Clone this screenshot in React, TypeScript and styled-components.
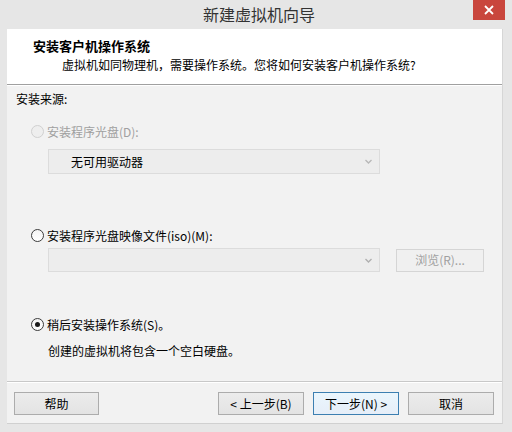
import { createGlobalStyle, styled } from "styled-components"

const GlobalStyle = createGlobalStyle`
  html, body {
    margin: 0;
    padding: 0;
    background: #e6e6e6;
  }
  body {
    font-family: "Noto Sans CJK SC", "Noto Sans", sans-serif;
    font-size: 12px;
    color: #000;
  }
`

const Window = styled.div`
  width: 512px;
  height: 432px;
  display: flex;
  flex-direction: column;
  background: #e6e6e6;
  box-sizing: border-box;
  overflow: hidden;
`

const TitleBar = styled.div`
  height: 29px;
  flex: none;
  display: grid;
  grid-template-columns: 40px 1fr 40px;
  align-items: start;
`

const Title = styled.div`
  grid-column: 2;
  text-align: center;
  font-size: 16px;
  line-height: 29px;
  color: #333;
  padding-left: 6px;
`

const CloseButton = styled.div`
  grid-column: 3;
  justify-self: end;
  margin-right: 7px;
  width: 32px;
  height: 20px;
  background: #c9463d;
  display: flex;
  align-items: center;
  justify-content: center;
`

const Client = styled.div`
  flex: 1;
  margin: 0 9px 8px 7px;
  display: flex;
  flex-direction: column;
  background: #f2f2f2;
  border-right: 1px solid #d6d6d6;
  border-bottom: 1px solid #d0d0d0;
`

const Header = styled.div`
  height: 56px;
  flex: none;
  background: #fff;
  border-bottom: 1px solid #a0a0a0;
  box-shadow: 0 1px 0 #fff;
  padding: 8px 0 0 26px;
  box-sizing: border-box;
`

const HeaderTitle = styled.div`
  font-weight: bold;
  font-size: 13px;
  line-height: 17px;
`

const HeaderSub = styled.div`
  padding-left: 29px;
  line-height: 17px;
  margin-top: 2px;
`

const Body = styled.div`
  flex: 1;
  padding: 6px 0 0 9px;
  display: flex;
  flex-direction: column;
  align-items: flex-start;
`

const Text = styled.div<{ $top?: number; $indent?: number }>`
  line-height: 16px;
  margin-top: ${(p) => p.$top ?? 0}px;
  margin-left: ${(p) => p.$indent ?? 0}px;
`

const RadioRow = styled.label<{ $top: number; $disabled?: boolean }>`
  display: flex;
  align-items: center;
  gap: 3px;
  height: 16px;
  margin-top: ${(p) => p.$top}px;
  margin-left: 15px;
  color: ${(p) => (p.$disabled ? "#a0a0a0" : "#000")};
`

const RadioCircle = styled.span<{ $checked?: boolean; $disabled?: boolean }>`
  width: 11px;
  height: 11px;
  border-radius: 50%;
  border: 1px solid ${(p) => (p.$disabled ? "#d0d0d0" : "#3c3c3c")};
  background: ${(p) => (p.$disabled ? "#eeeeee" : "linear-gradient(#f4f4f4, #ffffff)")};
  display: flex;
  align-items: center;
  justify-content: center;
  flex: none;

  &::after {
    content: "";
    width: 5px;
    height: 5px;
    border-radius: 50%;
    background: #1a1a1a;
    display: ${(p) => (p.$checked ? "block" : "none")};
  }
`

const FieldRow = styled.div<{ $top: number }>`
  display: flex;
  align-items: center;
  gap: 16px;
  margin-top: ${(p) => p.$top}px;
  margin-left: 32px;
`

const Combo = styled.div<{ $height: number }>`
  width: 332px;
  height: ${(p) => p.$height}px;
  box-sizing: border-box;
  border: 1px solid #dcdcdc;
  background: #ededed;
  display: flex;
  align-items: center;
  padding: 0 6px 0 22px;
  color: #000;
`

const ComboText = styled.span`
  flex: 1;
`

const Chevron = styled.svg`
  width: 9px;
  height: 9px;
  flex: none;
`

const Button = styled.div<{ $default?: boolean; $disabled?: boolean; $width?: number }>`
  width: ${(p) => p.$width ?? 86}px;
  height: 23px;
  box-sizing: border-box;
  border: 1px solid ${(p) => (p.$default ? "#3c7fb1" : p.$disabled ? "#d5d5d5" : "#acacac")};
  background: ${(p) =>
    p.$default
      ? "linear-gradient(#eaf6fd, #e6eef8)"
      : p.$disabled
      ? "#f0f0f0"
      : "linear-gradient(#ececec, #e3e3e3)"};
  color: ${(p) => (p.$disabled ? "#a0a0a0" : "#000")};
  display: flex;
  align-items: center;
  justify-content: center;
  line-height: 1;
`

const Footer = styled.div`
  flex: none;
  border-top: 1px solid #c8c8c8;
  box-shadow: inset 0 1px 0 #fff;
  padding: 10px 8px 8px 7px;
  display: flex;
  align-items: center;
`

const Spacer = styled.div`
  flex: 1;
`

const ButtonGroup = styled.div`
  display: flex;
  gap: 9px;
`

function ChevronIcon({ color }: { color: string }) {
  return (
    <Chevron viewBox="0 0 9 9">
      <path d="M1.5 3 L4.5 6 L7.5 3" fill="none" stroke={color} strokeWidth="1.4" />
    </Chevron>
  )
}

function App() {
  return (
    <>
      <GlobalStyle />
      <Window>
        <TitleBar>
          <Title>新建虚拟机向导</Title>
          <CloseButton>
            <svg width="10" height="10" viewBox="0 0 10 10">
              <path d="M1 1 L9 9 M9 1 L1 9" stroke="#fff" strokeWidth="1.8" />
            </svg>
          </CloseButton>
        </TitleBar>
        <Client>
          <Header>
            <HeaderTitle>安装客户机操作系统</HeaderTitle>
            <HeaderSub>虚拟机如同物理机，需要操作系统。您将如何安装客户机操作系统?</HeaderSub>
          </Header>
          <Body>
            <Text>安装来源:</Text>
            <RadioRow $top={16} $disabled>
              <RadioCircle $disabled />
              安装程序光盘(D):
            </RadioRow>
            <FieldRow $top={10}>
              <Combo $height={25}>
                <ComboText>无可用驱动器</ComboText>
                <ChevronIcon color="#b8b8b8" />
              </Combo>
            </FieldRow>
            <RadioRow $top={53}>
              <RadioCircle />
              安装程序光盘映像文件(iso)(M):
            </RadioRow>
            <FieldRow $top={5}>
              <Combo $height={24}>
                <ComboText />
                <ChevronIcon color="#b0b0b0" />
              </Combo>
              <Button $disabled $width={88}>浏览(R)...</Button>
            </FieldRow>
            <RadioRow $top={44}>
              <RadioCircle $checked />
              稍后安装操作系统(S)。
            </RadioRow>
            <Text $top={11} $indent={32}>创建的虚拟机将包含一个空白硬盘。</Text>
          </Body>
          <Footer>
            <Button $width={85}>帮助</Button>
            <Spacer />
            <ButtonGroup>
              <Button>&lt; 上一步(B)</Button>
              <Button $default>下一步(N) &gt;</Button>
              <Button>取消</Button>
            </ButtonGroup>
          </Footer>
        </Client>
      </Window>
    </>
  )
}

export default App
